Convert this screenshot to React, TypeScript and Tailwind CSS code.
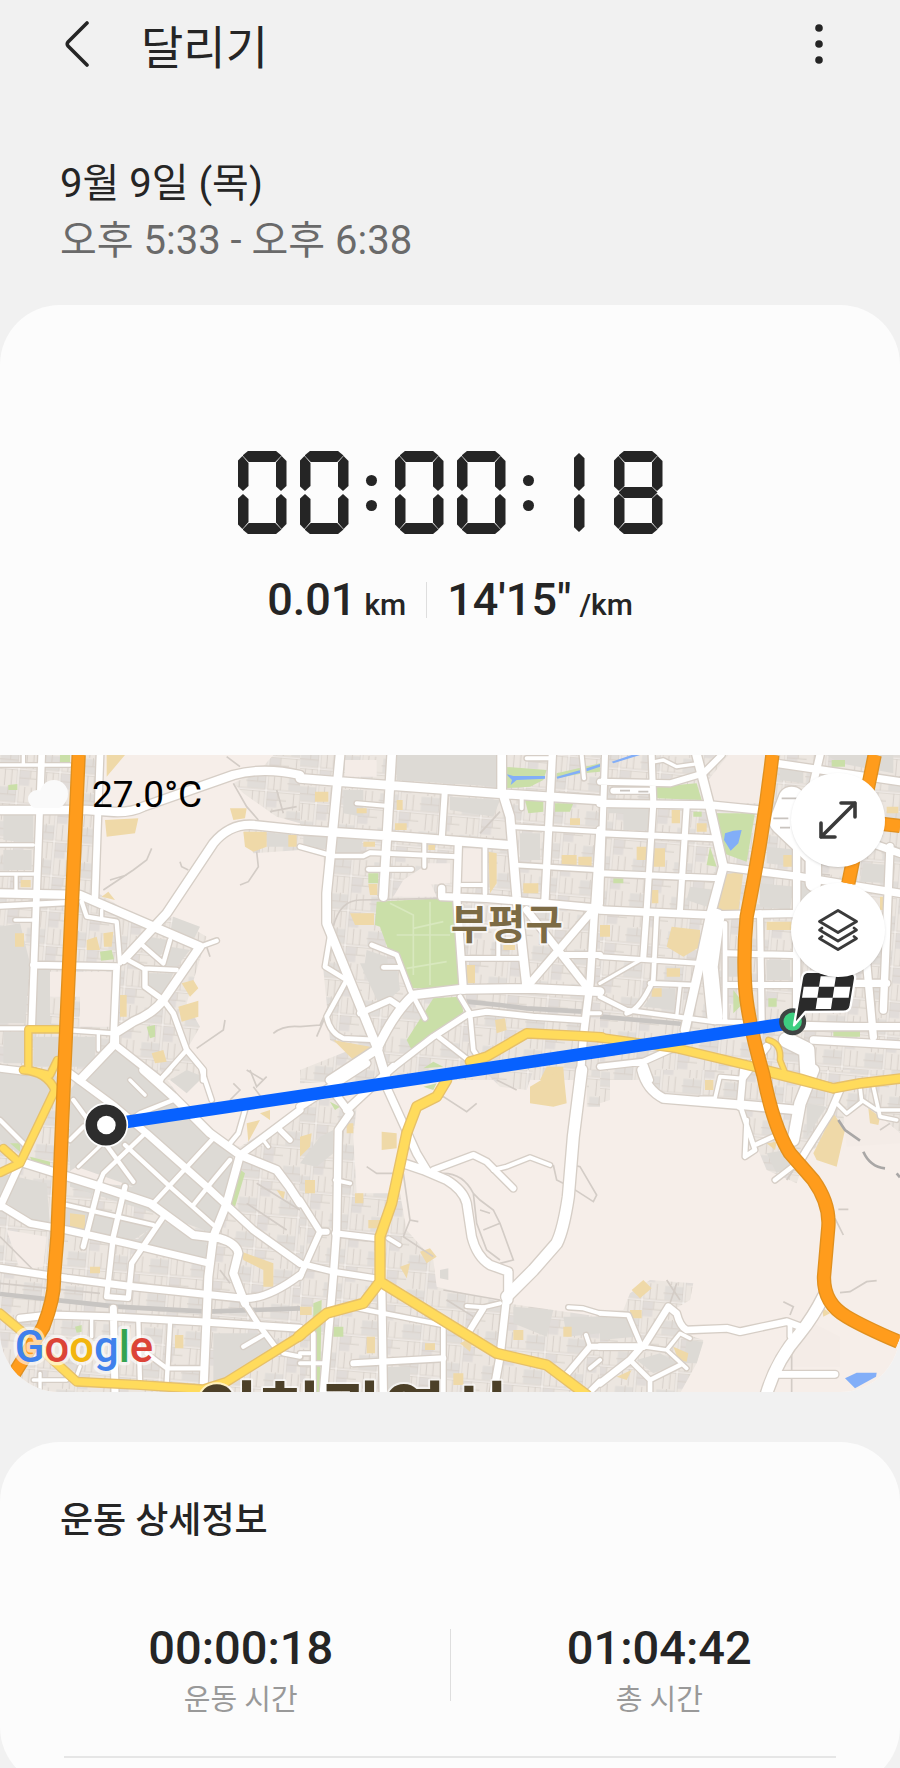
type Road = [width: number, d: string];

interface Tile {
  x: number;
  y: number;
  urban: string;
  blocks?: string;
  land?: string;
  parks: string;
  amber: string;
  rail?: string;
  lanes?: string;
  water?: string;
  roads: Road[];
  yellow: Road[];
}

// Map geometry, three units to a pixel, in a grid of 3 x 2 tiles
const TILES: Tile[] = [
  {
    x: 0,
    y: -15,
    urban:
      'M0 15H285V190L295 430L440 520L520 500L620 560L560 760L600 830L560 900L610 990H0Z M820 15H900V220L830 200L730 130L700 100L780 60Z M730 240H900V300L760 310Z',
    blocks:
      'M0 530L60 520L90 640L75 820H0Z M105 660H150V830H105Z M10 845H75V940H10Z M100 860H285V950H100Z M270 985L340 890L460 990Z M10 190H100V280L10 270Z M10 300H95V360H10Z M520 500L600 530L570 590L510 550Z M800 250H870V290H800Z M450 560L500 570L480 620L430 580Z M510 590L570 600L530 650H490Z M440 670H520L490 740L440 710Z',
    land: 'M150 665H335V830H240V740H150Z',
    parks: 'M300 605L335 600L342 628L303 632Z M180 15H210V38H180Z M25 105L52 102V120H25Z M440 830L465 825V860L450 865Z',
    amber:
      'M315 210L415 205L405 250L320 260Z M320 15H375L320 80Z M730 245L800 245V290L760 305L735 290Z M865 255H890V290H865Z M690 175L740 175L735 205L700 210Z M305 440L325 425L345 450Z M260 570L290 560L300 600H260Z M310 550L340 545L335 590L312 590Z M545 700L580 690L595 715L570 740Z M535 770L595 752V800L545 815Z M455 910L490 900L500 935L465 940Z M360 735H380V800H360Z M45 550H72V590H45Z M62 390H92V412H62Z',
    lanes:
      'M310 420L400 360L440 330L455 295 M330 390L380 375 M540 335L545 350L565 360 M770 305L775 350L745 395L720 405 M700 100L740 170L775 210 M590 895L670 840L675 810 M820 850Q850 825 900 830 M740 960L790 990 M620 590L630 620 M680 20L720 50 M830 120L850 190 M810 185L890 170',
    roads: [
      [10, 'M0 45H210 M0 285H100 M0 372H110 M48 372V430 M45 510H110 M295 850V900 M70 15V45 M305 480V505'],
      [13, 'M245 455L260 500L350 515L360 640 M415 575L490 640L510 570 M375 625L430 655L530 660 M480 990L560 900 M650 572L600 590 M200 840L340 850 M0 835H90'],
      [16, 'M0 468L200 458 M435 660V710L490 750L520 790L560 900L610 960V990'],
      [20, 'M300 15L285 440 M125 15L95 830 M100 645L350 650L340 880 M340 880L480 990 M0 955L80 965'],
      [25, 'M0 180H260L330 185Q390 190 430 170L700 75Q790 50 900 75 M0 430L240 435L460 530L600 590 M900 240L760 225Q690 220 640 280L500 490L370 630 M600 590L490 750Q460 790 400 815L345 850V880L240 990'],
    ],
    yellow: [[22, 'M180 838H85V960L150 975L172 930']],
  },
  {
    x: 900,
    y: -15,
    urban: 'M0 15H900V990H260L0 1000V960L150 900L90 870L80 760L70 660L90 560L70 320L0 300Z',
    blocks:
      'M290 15H600L590 110L290 90Z M110 260H190L180 310H110Z M10 255H90V300L10 285Z M660 250H720V330H660Z M450 140L600 150L580 200L450 180Z M130 120H190V200L130 190Z M180 640H290L300 720L240 770Z M200 600L260 620L270 680L190 670Z',
    land: 'M310 390L370 350L410 440H280Z M135 30H230V80H135Z M370 340L450 340V400L380 405Z M485 295H545V400H485Z',
    parks:
      'M230 455L420 445L475 460V715H335L300 620L265 600L240 530L225 525Z M400 745L480 740L490 785L420 850L335 900L320 870Z M610 50L740 60L730 90L690 110L610 115Z M770 70L900 40V65L850 70L770 85Z M675 150H730V185L685 190Z M765 160H820L810 185H765Z M205 370H235V400H205Z M370 955L400 935L430 950Z',
    amber:
      'M150 490H222V525L165 525Z M45 125H85V155H45Z M285 220H320V240H285Z M290 150H308V180H290Z M170 175H200V190H170Z M565 305L590 310V400L570 430Z M785 315H830V345H785Z M835 320H875V350H835Z M670 400H715V430H670Z M500 645H525V700H500Z M585 810L615 805L620 840L590 850Z M810 205H840V225H810Z M100 870L210 890V930L160 930Z M190 275H225V290H190Z M740 950H790V990H720Z M205 402H232V435H210Z M610 585H645V600H610Z M385 285H405V300H385Z',
    rail: 'M500 755L600 765L680 775L850 785',
    lanes: 'M0 830L60 825L90 760 M50 860L80 790 M100 530Q120 450 180 450L420 445 M540 250L600 185',
    water: 'M618 72L640 78H735V86L650 90L632 105L636 90Z M770 80L860 55L900 42V50L860 64L772 86Z',
    roads: [
      [12, 'M373 270V350 M485 405H555 M170 160L265 168 M595 560V625 M860 790H900 M665 140V175 M845 15L852 85 M680 25H750'],
      [14, 'M0 290L100 318H190L210 308L470 320 M555 290V430 M635 230L900 245 M645 345L900 360 M205 358H335 M490 625H670 M215 585L290 615L330 720L375 805 M480 740L510 790L520 900L530 915 M415 860L505 930 M90 560L75 650L140 690L80 800Q90 850 130 865L230 870 M250 652H300'],
      [18, 'M270 960L400 860L500 795L560 785L700 800L850 810 M790 615H900 M180 790L270 750L300 770 M435 115L425 270'],
      [22, 'M757 15L735 450 M475 285L470 440L490 720 M425 415V440L560 445L680 455L900 475 M900 240L885 460L870 700L850 860L840 990 M680 480L860 710 M690 700L870 490'],
      [26, 'M0 85L120 95L590 130L900 150 M120 15L90 330L80 430V520L230 890L260 990 M275 15L250 440 M605 15V120L630 200L650 440L680 710 M0 240L300 260L620 285 M230 900Q280 790 340 735L480 718L690 715L900 725 M90 990L235 895'],
    ],
    yellow: [[28, 'M510 935L560 920L680 850L840 858L905 862']],
  },
  {
    x: 1800,
    y: -15,
    urban: 'M0 15H900V990H0Z',
    blocks:
      'M25 170H150V240H70V190H25Z M600 400L700 410L690 480H600Z M500 290L600 300L590 350L500 340Z M480 400L580 410L570 480L480 470Z M500 630H570V690H500Z M385 625H420V680H385Z M540 55L610 65V100L540 90Z M680 15H880V70L720 40Z M790 340L870 345V400L780 395Z M270 410L340 420L320 470L260 450Z M170 715H225V780L130 770Z',
    land: 'M385 15H500L480 160H340L325 90Z',
    parks:
      'M170 110L290 100L305 150L170 145Z M345 190L465 190L440 335L370 310Z M700 840H780V860H700Z M400 720L430 760L400 790Z M330 290L350 350L320 345Z M40 385H70V400H40Z M695 30H735V50H695Z M280 185H305V200H280Z M505 745H530V770H505Z',
    amber:
      'M360 375L430 365L415 485L345 480Z M160 295H195V350H160Z M215 530L300 540V590L250 620L200 590Z M500 515H575V540H500Z M110 290H140V330H110Z M550 315H590V350H550Z M0 525H30V560H0Z M200 655H240V680H200Z M155 715H185V740H155Z M215 180H240V220H215Z M840 440H865V480H840Z M290 220H320V245H290Z M155 420H175V460H155Z M860 170H895V190H860Z',
    rail: 'M0 800L250 822',
    lanes: 'M640 370L690 375 M830 290H890',
    water: 'M375 250Q400 240 425 240L415 280L392 302L372 270Z M35 35L95 15H120L40 40Z',
    roads: [
      [10, 'M165 35L190 30L230 50L300 40 M0 700L130 625 M240 710L230 800'],
      [14, 'M170 490L160 690Q120 780 80 790 M0 620L300 640 M150 700L280 705 M0 740L80 780L340 815L900 830 M375 520V810'],
      [18, 'M15 15L0 460 M155 15L160 160L140 480L130 620 M260 170L240 480 M0 95L210 100L310 70L365 15 M0 250L340 265 M0 370L360 385 M0 950L130 935L230 890 M130 935L150 990 M380 610L580 615 M380 705L600 705 M480 490L485 810 M40 122H145'],
      [22, 'M0 160L330 165L480 180 M370 350L600 380L900 430 M0 480L330 495L600 490 M660 15L640 100 M530 40L900 95 M870 290L850 780 M760 260L900 310 M590 280V820 M800 640L820 860 M640 870L900 885 M600 830H900 M720 700H860 M430 980L500 890'],
      [26, 'M290 15L325 150L370 350L330 500L300 640L255 840'],
      [46, 'M350 500L330 650L345 800 M640 120V400 M560 870L620 900L625 990'],
      [80, 'M575 150L550 215L640 300'],
    ],
    yellow: [
      [16, 'M505 870Q545 880 540 930L560 980'],
      [26, 'M-5 862L230 895L460 950L600 985L700 1015'],
    ],
  },
  {
    x: 0,
    y: 945,
    urban: 'M0 0H480L620 190L720 230L900 120V970H0Z',
    blocks:
      'M0 0H170L160 90L70 260L0 210Z M260 0H430L620 190L700 250L680 400L640 490L500 440L210 350V60Z M0 310L140 340L150 470L90 460L0 380Z M480 450L620 510V570L400 520Z M640 790H780L830 850L700 920L640 940Z M560 0L610 20L560 70L510 30Z M200 410L460 470L400 510L190 470Z',
    land: 'M20 480L140 500L130 590L60 600Z M230 290L400 350L300 340L200 310Z',
    parks: 'M715 295L735 310L705 410L690 405Z M90 260L150 275V290L100 285Z M30 220H60V245Z M225 770L245 765V785L230 788Z',
    amber:
      'M210 430L255 435V480H210Z M725 545L820 580V650H790V600L730 570Z M525 795H550V835H525Z M270 590H300V610H270Z M740 160L780 150L745 215Z M780 130L810 120V150Z M830 360L855 365L850 390Z',
    rail: 'M0 672L350 710L620 725L900 715',
    lanes: 'M0 640L300 670 M0 500L100 600 M690 90L720 60L700 40 M750 0L770 50L800 20 M760 50L790 90 M770 340L900 420 M740 400L860 480 M660 600L690 640 M180 500L180 620',
    roads: [
      [10, 'M390 30L435 75 M790 210L805 230 M275 740V800 M100 930H200 M240 890L225 930 M235 290L345 185 M120 910V970'],
      [13, 'M345 185L420 130L520 90 M300 335L310 310L430 195 M460 400L640 205 M580 405L640 330L690 270 M220 90L400 335 M375 225L510 350L640 465 M200 405L460 465 M415 750L420 940 M510 760L500 940 M440 850L500 895H610 M730 830L790 795 M605 0L635 90 M0 150L80 230 M480 30L510 0 M735 120L715 190L690 220 M900 860L850 850 M210 210L250 170'],
      [16, 'M300 335L250 530 M375 350L340 500L320 680L385 685L395 580L490 440 M840 180L870 210 M735 700L780 770L825 830'],
      [21, 'M60 280L0 410 M210 10L345 110L440 190L620 350L760 480L900 580 M0 405L90 460L200 480L380 520L630 580 M0 595L200 625L400 650L730 685Q800 690 900 615 M60 745L150 735L330 740L600 755L900 775 M340 715L345 970 M720 255L900 120'],
      [24, 'M60 275L300 350L450 400L580 495L660 505Q710 520 715 550L700 610L735 700 M430 0L520 80L630 190L720 255L830 300Q870 350 900 400 M720 255L680 400L640 500L625 620L610 970'],
    ],
    yellow: [
      [24, 'M70 0Q140 5 165 60L60 280L0 308 M10 235L60 280'],
      [26, 'M0 730L60 780L230 935L420 945L610 958L680 935L905 795'],
    ],
  },
  {
    x: 900,
    y: 945,
    urban:
      'M0 100L120 80L170 110L160 200L170 370L300 370L320 480L400 570L410 650L620 700L900 740V970H0Z M550 0H700L680 60L600 50Z M860 0H900V110H860Z',
    blocks: 'M60 200L100 180V250L50 290L0 280Z M640 710L760 720L740 800L640 760Z M790 740H900V790L800 800Z M420 600L445 595V630L420 625Z M260 890H330V965H260Z',
    parks: 'M40 700L65 690L60 970H48L40 740Z M100 770H130V800H100Z M370 50L410 40L400 60Z M90 95L120 110L105 120Z',
    amber:
      'M245 185L290 190V235L245 240Z M690 50L740 20L790 0L800 100L760 110L690 100Z M360 545L390 535L410 560L380 580Z M15 330H45V370H15Z M200 800H225V850H200Z M460 910H490V945H460Z M640 780H670V810H640Z M0 200L35 190L30 230L0 260Z M300 590L330 580L320 625Z M165 370H190V400H165Z M140 160H160V190H140Z M480 820L520 800L510 845Z M790 770H815V800H790Z M205 450H240V475H205Z M0 710H35V735H0Z M375 820H405V840H375Z',
    lanes:
      'M430 310Q490 310 520 370L540 390L580 420L600 460L640 570L600 580 M520 370L530 460L560 540L600 570 M540 420L570 430 M550 480L600 460 M760 285L770 330L810 350L880 395L890 375L840 290L800 280 M310 310L330 450L355 455 M330 450L310 500L400 560 M360 90L430 80L500 125L530 100 M200 290L230 310H290 M430 660L600 690 M440 690L520 740 M590 30L650 60',
    roads: [
      [12, 'M580 300L620 290L690 262L750 285 M500 708L550 712L600 700 M805 712L850 715L900 730 M105 330L150 340 M0 850H30 M0 880H80 M858 795L870 830 M265 505L298 525 M870 895L900 870'],
      [14, 'M40 790V970 M150 710L430 765V970 M185 700L240 650'],
      [18, 'M400 300L520 255L560 275L640 355 M0 390L60 485L0 620 M105 490L230 505 M0 580L100 605L225 625 M160 880L430 865 M550 715L510 780 M790 925L870 830H900 M60 485L80 485 M865 970L900 935'],
      [22, 'M245 640L250 970 M250 30L350 250L380 300 M105 70L150 130L115 180L110 480L100 620L70 970 M0 110L200 -20 M140 120L280 -10 M620 680L600 860L580 970'],
      [25, 'M310 280L370 300L440 330Q490 360 500 400L515 500Q530 560 570 585L625 605V690'],
      [33, 'M845 0L820 200L805 380Q790 480 770 520L700 600L620 680'],
    ],
    yellow: [
      [30, 'M440 30L410 80L350 110L320 190L275 400L240 500V635L190 700L80 730L-5 800 M240 635L590 850L740 885L860 975'],
    ],
  },
  {
    x: 1800,
    y: 945,
    urban:
      'M0 0H30V90L0 100Z M130 0H640L620 250L590 340L500 300L420 110L180 90Z M640 0H900V190L830 130L780 100L700 200L620 250Z M0 730L70 720L90 670L150 630L280 640L270 690L220 720L250 790L310 810L290 880L240 970H0Z',
    blocks: 'M0 740L80 745L110 800L0 810Z M110 870L180 850L230 880L160 910Z M500 250L560 240L580 280L530 310Z M620 100L680 110L620 200Z M260 810L310 815L290 880L250 880Z',
    land: 'M730 130L780 100L900 190V220L740 230Z M565 810L640 760L720 800V890H550Z',
    parks: '',
    amber:
      'M640 250L700 130L735 180L710 290L650 270Z M95 660L130 630L155 655L120 685Z M90 720H125V745H90Z M220 830L265 850L260 875L235 870Z M805 115L840 140L835 165L810 160Z M315 30H340V60H315Z M50 920L95 900L80 930Z M500 220L530 215L525 240Z M665 710L690 730L670 740Z',
    lanes:
      'M720 668L750 665L800 635L830 632 M550 695L580 710L570 735 M715 418H745 M705 445L730 495 M575 800V970 M200 630L240 690 M230 640L210 700 M840 180L870 160 M560 330L580 300',
    water: 'M735 925L770 908H830L828 920L765 955Z',
    roads: [
      [11, 'M300 85H345L360 20L420 25 M780 50L785 95L740 130L710 100 M785 90L830 120H900 M820 50L840 140L890 150 M130 830L200 840L260 895 M200 840L240 790L270 805'],
      [14, 'M425 120L465 240L435 260L440 150 M465 225L520 200 M0 730L85 735L125 830 M90 870L150 930 M150 970V930L240 885 M570 765V800 M590 280L525 330'],
      [20, 'M600 770L560 755L420 785L380 775L260 780Q240 770 230 730L205 710L130 830H0 M535 913H705 M125 830L90 870L0 940 M430 0L420 110 M720 60L690 130L620 240L590 290'],
      [26, 'M125 0Q140 60 190 85L430 105L590 120'],
      [34, 'M640 0L600 100L580 210 M670 680Q640 740 600 790Q530 870 500 970'],
    ],
    yellow: [[28, 'M520 10L700 55L780 40L905 25']],
  },
];

const EXPRESSWAYS =
  'M236 0L193 945L172 1445L162 1565Q165 1625 130 1715L40 1860 M2317 0Q2290 235 2240 485Q2230 585 2235 685Q2240 785 2290 960Q2320 1115 2370 1195L2440 1275Q2490 1345 2485 1415L2472 1565Q2470 1645 2540 1685Q2590 1715 2695 1760 M2624 0L2545 385 M2640 206L2700 213';

const TEXT = "font-['Roboto','Noto_Sans_CJK_KR',sans-serif]";

function TileLayer({ render }: { render: (tile: Tile) => React.ReactNode }) {
  return (
    <>
      {TILES.map((tile) => (
        <g key={`${tile.x}-${tile.y}`} transform={`translate(${tile.x} ${tile.y})`}>
          {render(tile)}
        </g>
      ))}
    </>
  );
}

function RouteMap() {
  return (
    <svg viewBox="0 0 2700 1911" className="block w-full" role="img" aria-label="달리기 경로 지도">
      <defs>
        <pattern id="streets" width="124" height="104" patternUnits="userSpaceOnUse" patternTransform="rotate(5)">
          <rect width="124" height="104" fill="#ece6e0" />
          <rect x="4" y="4" width="56" height="42" fill="#e1ddd9" />
          <rect x="66" y="56" width="30" height="44" fill="#e1dcd9" />
          <path d="M0 26H62M62 78H124M22 52V104M42 52V104M84 0V52M104 0V52M34 0V26M98 52V78" stroke="#d9d2cb" strokeWidth="3" fill="none" />
          <path d="M0 51H124M62 0V104" stroke="#d5cec7" strokeWidth="8" />
          <path d="M0 51H124M62 0V104" stroke="#f7f3f0" strokeWidth="4" />
        </pattern>
      </defs>

      <rect width="2700" height="1911" fill="#f6eee9" />
      <TileLayer
        render={(t) => (
          <>
            <path d={t.urban} fill="url(#streets)" />
            <path d={t.blocks} fill="#dddad5" />
            <path d={t.land} fill="#f4ece7" />
            <path d={t.parks} fill="#cadfa8" />
            <path d={t.amber} fill="#efd9a8" />
            <path d={t.lanes} fill="none" stroke="#d3ccc6" strokeWidth="5" />
            <path d={t.rail} fill="none" stroke="#c8c5c2" strokeWidth="14" />
            <path d={t.water} fill="#82aef8" />
          </>
        )}
      />

      {/* Footpaths in the park */}
      <path
        d="M1170 445L1240 480V660M1240 520L1330 500M1190 540H1350M1220 640L1340 620M1290 440V690"
        fill="none"
        stroke="#d8e8be"
        strokeWidth="5"
      />

      {/* Road casings go under every road so that junctions stay open */}
      <g fill="none" strokeLinecap="round" strokeLinejoin="round">
        <TileLayer render={(t) => t.roads.map(([w, d]) => <path key={d} d={d} stroke="#d6cec6" strokeWidth={w + 8} />)} />
        <TileLayer render={(t) => t.roads.map(([w, d]) => <path key={d} d={d} stroke="#fff" strokeWidth={w} />)} />
        <TileLayer render={(t) => t.yellow.map(([w, d]) => <path key={d} d={d} stroke="#e6c06a" strokeWidth={w + 4} />)} />
        <TileLayer render={(t) => t.yellow.map(([w, d]) => <path key={d} d={d} stroke="#ffdb5c" strokeWidth={w - 4} />)} />
      </g>
      <path d={EXPRESSWAYS} fill="none" stroke="#e0901f" strokeWidth="43" />
      <path d={EXPRESSWAYS} fill="none" stroke="#ff9c1c" strokeWidth="35" />
      <path
        d="M2515 1095L2535 1125L2580 1157M2590 1190Q2610 1235 2655 1240M2690 1255L2700 1267"
        fill="none"
        stroke="#a9a7a6"
        strokeWidth="8"
      />
      <path d="M2345 130H2390M2320 190H2365M2340 218H2370M1860 107H1890M1915 110H1945" stroke="#c9c4bf" strokeWidth="5" />

      {/* Place names */}
      <g className="font-['Noto_Sans_CJK_KR',sans-serif] font-bold" strokeLinejoin="round">
        <text x="1352" y="552" fontSize="122" fill="#7c6b45" stroke="#fff" strokeOpacity="0.7" strokeWidth="12" paintOrder="stroke">
          부평구
        </text>
        <text x="588" y="2048" fontSize="204" fill="#4c4028" stroke="#fff" strokeOpacity="0.6" strokeWidth="12" paintOrder="stroke">
          인천광역시
        </text>
      </g>

      {/* Route with its start and finish */}
      <path d="M318 1110L2378 803" stroke="#0761ff" strokeWidth="38" />
      <circle cx="318" cy="1110" r="64" fill="#2d2d2d" stroke="#fff" strokeWidth="5" />
      <circle cx="319" cy="1110" r="28" fill="#fff" />
      <circle cx="2378" cy="800" r="34" fill="#3ecf80" stroke="#3f4443" strokeWidth="13" />
      <path
        d="M2382 811L2406 668Q2409 650 2428 650L2552 654Q2568 656 2565 673L2552 752Q2549 770 2530 770L2416 771Z"
        fill="#2a2a2a"
        stroke="#fff"
        strokeWidth="7"
        strokeLinejoin="round"
      />
      <path d="M2462 664H2508L2503 695H2457Z M2411 695H2457L2452 728H2406Z M2503 695H2551L2546 728H2498Z M2452 728H2498L2493 762H2447Z" fill="#fff" />

      <text
        x="44"
        y="1822"
        fontSize="131"
        className="font-['Roboto',sans-serif] font-medium"
        stroke="#fff"
        strokeOpacity="0.6"
        strokeWidth="20"
        strokeLinejoin="round"
        paintOrder="stroke"
      >
        <tspan fill="#4081ec">G</tspan>
        <tspan fill="#dc4437">o</tspan>
        <tspan fill="#f2b50f">o</tspan>
        <tspan fill="#4081ec">g</tspan>
        <tspan fill="#34a350">l</tspan>
        <tspan fill="#dc4437">e</tspan>
      </text>
    </svg>
  );
}

// Segments of the display: a top, b/c right, d bottom, e/f left, g middle, h/i the two bars of a one
const SEGMENT_STYLES: Record<string, string> = {
  a: 'left-[5px] top-0 h-[11px] w-[39px] [clip-path:polygon(0_40%,14%_0,86%_0,100%_40%,84%_100%,16%_100%)]',
  b: 'right-0 top-[5px] h-[35px] w-[11px] [clip-path:polygon(55%_0,100%_14%,100%_86%,50%_100%,0_86%,0_20%)]',
  c: 'right-0 top-[43px] h-[35px] w-[11px] [clip-path:polygon(50%_0,100%_14%,100%_86%,55%_100%,0_80%,0_14%)]',
  d: 'bottom-0 left-[5px] h-[11px] w-[39px] [clip-path:polygon(0_60%,16%_0,84%_0,100%_60%,86%_100%,14%_100%)]',
  e: 'left-0 top-[43px] h-[35px] w-[11px] [clip-path:polygon(50%_0,100%_14%,100%_80%,45%_100%,0_86%,0_14%)]',
  f: 'left-0 top-[5px] h-[35px] w-[11px] [clip-path:polygon(45%_0,100%_20%,100%_86%,50%_100%,0_86%,0_14%)]',
  g: 'left-[5px] top-[36px] h-[11px] w-[39px] [clip-path:polygon(0_50%,14%_0,86%_0,100%_50%,86%_100%,14%_100%)]',
  h: 'left-[22px] top-[2px] h-[38px] w-[11px] [clip-path:polygon(50%_0,100%_14%,100%_86%,50%_100%,0_86%,0_14%)]',
  i: 'left-[22px] top-[43px] h-[38px] w-[11px] [clip-path:polygon(50%_0,100%_14%,100%_86%,50%_100%,0_86%,0_14%)]',
};

const DIGIT_SEGMENTS: Record<string, string> = { '0': 'abcdef', '1': 'hi', '8': 'abcdefg' };

function SegmentClock({ time }: { time: string }) {
  return (
    <div role="timer" aria-label={time} className="flex justify-center gap-[13px]">
      {time.split('').map((char, i) =>
        char === ':' ? (
          <span key={i} className="flex w-5 flex-col items-center gap-[14px] pt-6">
            <span className="size-[11px] rounded-full bg-[#252525]" />
            <span className="size-[11px] rounded-full bg-[#252525]" />
          </span>
        ) : (
          <span key={i} className="relative h-[83px] w-[49px]">
            {DIGIT_SEGMENTS[char].split('').map((segment) => (
              <span key={segment} className={`absolute bg-[#252525] ${SEGMENT_STYLES[segment]}`} />
            ))}
          </span>
        ),
      )}
    </div>
  );
}

function DetailItem({ value, label }: { value: string; label: string }) {
  return (
    <div className="flex flex-1 flex-col items-center">
      <span className="text-[47px] font-medium leading-[48px] text-[#252525]">{value}</span>
      <span className="mt-2 text-[29px] leading-10 text-[#999]">{label}</span>
    </div>
  );
}

export default function App() {
  return (
    <div className={`h-screen overflow-y-auto bg-[#f1f1f1] text-[#252525] [scrollbar-width:none] ${TEXT}`}>
      <header className="flex h-[88px] items-center px-16">
        <button type="button" aria-label="뒤로">
          <svg width="26" height="46" viewBox="0 0 26 46" fill="none" stroke="#252525" strokeWidth="3.600" strokeLinecap="round" strokeLinejoin="round">
            <path d="M23 2L4 21Q2.500 23 4 25L23 44" />
          </svg>
        </button>
        <h1 className="ml-[51px] flex-1 pt-2 text-[46px] leading-[64px]">달리기</h1>
        <button type="button" aria-label="더보기" className="flex w-[34px] justify-center">
          <svg width="10" height="42" viewBox="0 0 10 42" fill="#252525">
            <circle cx="5" cy="5" r="3.800" />
            <circle cx="5" cy="21" r="3.800" />
            <circle cx="5" cy="37" r="3.800" />
          </svg>
        </button>
      </header>

      <section className="px-[60px] pb-9 pt-[67px] text-[40px] leading-[57px]">
        <h2>9월 9일 (목)</h2>
        <p className="text-[#6a6a6a]">오후 5:33 - 오후 6:38</p>
      </section>

      <main>
        <section className="overflow-hidden rounded-[60px] bg-[#fcfcfc]">
          <div className="pb-[123px] pt-[146px]">
            <SegmentClock time="00:00:18" />
            <div className="mt-[34px] flex h-16 items-center justify-center font-medium">
              <p className="text-[45px]">
                0.01<span className="ml-2 text-[30px]">km</span>
              </p>
              <span className="mx-5 h-9 w-px bg-[#dedede]" />
              <p className="text-[45px]">
                14'15"<span className="ml-2 text-[30px]">/km</span>
              </p>
            </div>
          </div>

          <div className="relative">
            <RouteMap />
            <div className="absolute left-[26px] top-[18px] flex items-center gap-[22px]">
              <svg width="44" height="32" viewBox="0 0 44 32">
                <g fill="#fafafa">
                  <circle cx="28" cy="15" r="14" />
                  <circle cx="11" cy="20" r="9" />
                  <rect x="4" y="17" width="34" height="12" rx="6" />
                </g>
              </svg>
              <span className="text-[37px] leading-[44px] text-black">27.0°C</span>
            </div>
            <div className="absolute right-[15px] top-[18px] flex flex-col gap-4">
              <button type="button" aria-label="지도 확대" className="flex size-[94px] items-center justify-center rounded-full bg-white shadow-sm">
                <svg width="38" height="38" viewBox="0 0 38 38" fill="none" stroke="#3a3a3a" strokeWidth="3.600" strokeLinecap="round" strokeLinejoin="round">
                  <path d="M2 36L36 2M22 2H36V16M2 22V36H16" />
                </svg>
              </button>
              <button type="button" aria-label="지도 유형" className="flex size-[94px] items-center justify-center rounded-full bg-white shadow-sm">
                <svg width="42" height="42" viewBox="0 0 42 42" fill="none" stroke="#3a3a3a" strokeWidth="2.800" strokeLinecap="round" strokeLinejoin="round">
                  <path d="M21 1.500L39.500 12.500L21 23.500L2.500 12.500Z" />
                  <path d="M5 19L2.500 21L21 32L39.500 21L37 19" />
                  <path d="M5 27.500L2.500 29.500L21 40.500L39.500 29.500L37 27.500" />
                </svg>
              </button>
            </div>
          </div>
        </section>

        <section className="mt-[50px] rounded-[60px] bg-[#fcfcfc] px-8 pb-[29px] pt-[51px]">
          <h2 className="px-7 text-[36px] font-medium leading-[56px]">운동 상세정보</h2>
          <div className="mt-[75px] flex items-start">
            <DetailItem value="00:00:18" label="운동 시간" />
            <span className="mt-[5px] h-[72px] w-px bg-[#dedede]" />
            <DetailItem value="01:04:42" label="총 시간" />
          </div>
          <hr className="mx-8 mt-9 border-t-2 border-[#e6e6e6]" />
        </section>
      </main>
    </div>
  );
}
